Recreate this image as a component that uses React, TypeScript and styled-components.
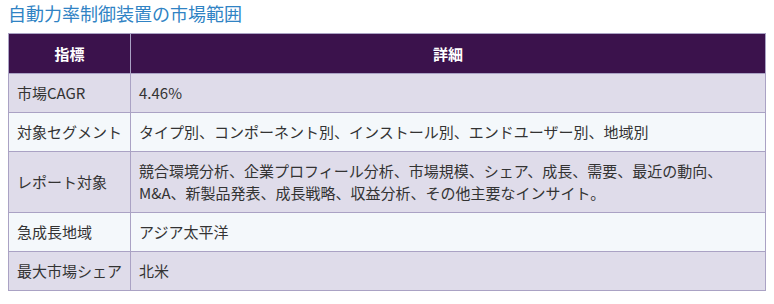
import styled, { createGlobalStyle } from "styled-components";

const theme = {
  title: "#3083c4",
  head: "#3b124c",
  border: "#aaa2c4",
  odd: "#dfdcea",
  even: "#f4f8fb",
  text: "#333",
  white: "#fff",
};

const rows = [
  { label: "市場CAGR", detail: "4.46%" },
  {
    label: "対象セグメント",
    detail: "タイプ別、コンポーネント別、インストール別、エンドユーザー別、地域別",
  },
  {
    label: "レポート対象",
    detail:
      "競合環境分析、企業プロフィール分析、市場規模、シェア、成長、需要、最近の動向、M&A、新製品発表、成長戦略、収益分析、その他主要なインサイト。",
  },
  { label: "急成長地域", detail: "アジア太平洋" },
  { label: "最大市場シェア", detail: "北米" },
];

const GlobalStyle = createGlobalStyle`
  body {
    margin: 0;
    padding: 0 8px;
    background: #fff;
    font-family: "Noto Sans CJK JP", "Noto Sans", sans-serif;
  }
`;

export default function App() {
  return (
    <>
      <GlobalStyle />
      <Section>
        <Title>自動力率制御装置の市場範囲</Title>
        <Table>
          <colgroup>
            <Col $width={122} />
            <Col />
          </colgroup>
          <thead>
            <tr>
              <Th>指標</Th>
              <Th>詳細</Th>
            </tr>
          </thead>
          <tbody>
            {rows.map((row, i) => (
              <Row key={row.label} $odd={i % 2 === 0}>
                <Td>{row.label}</Td>
                <Td>{row.detail}</Td>
              </Row>
            ))}
          </tbody>
        </Table>
      </Section>
    </>
  );
}

const Section = styled.section`
  display: flex;
  flex-direction: column;
`;

const Title = styled.h3`
  margin: 0 0 7px;
  font-size: 18px;
  line-height: 26px;
  font-weight: 400;
  color: ${theme.title};
`;

const Table = styled.table`
  width: 100%;
  table-layout: fixed;
  border-collapse: collapse;
  border: 1px solid ${theme.border};
  font-size: 15px;
  color: ${theme.text};
`;

const Col = styled.col<{ $width?: number }>`
  width: ${(p) => (p.$width ? `${p.$width}px` : "auto")};
`;

const Th = styled.th`
  background: ${theme.head};
  color: ${theme.white};
  font-weight: 700;
  text-align: center;
  padding: 8px;
  line-height: 23px;
  border: 1px solid ${theme.border};
`;

const Row = styled.tr<{ $odd: boolean }>`
  background: ${(p) => (p.$odd ? theme.odd : theme.even)};
`;

const Td = styled.td`
  padding: 8px 4px 8px 8px;
  line-height: 22px;
  text-align: left;
  vertical-align: middle;
  border: 1px solid ${theme.border};
`;
